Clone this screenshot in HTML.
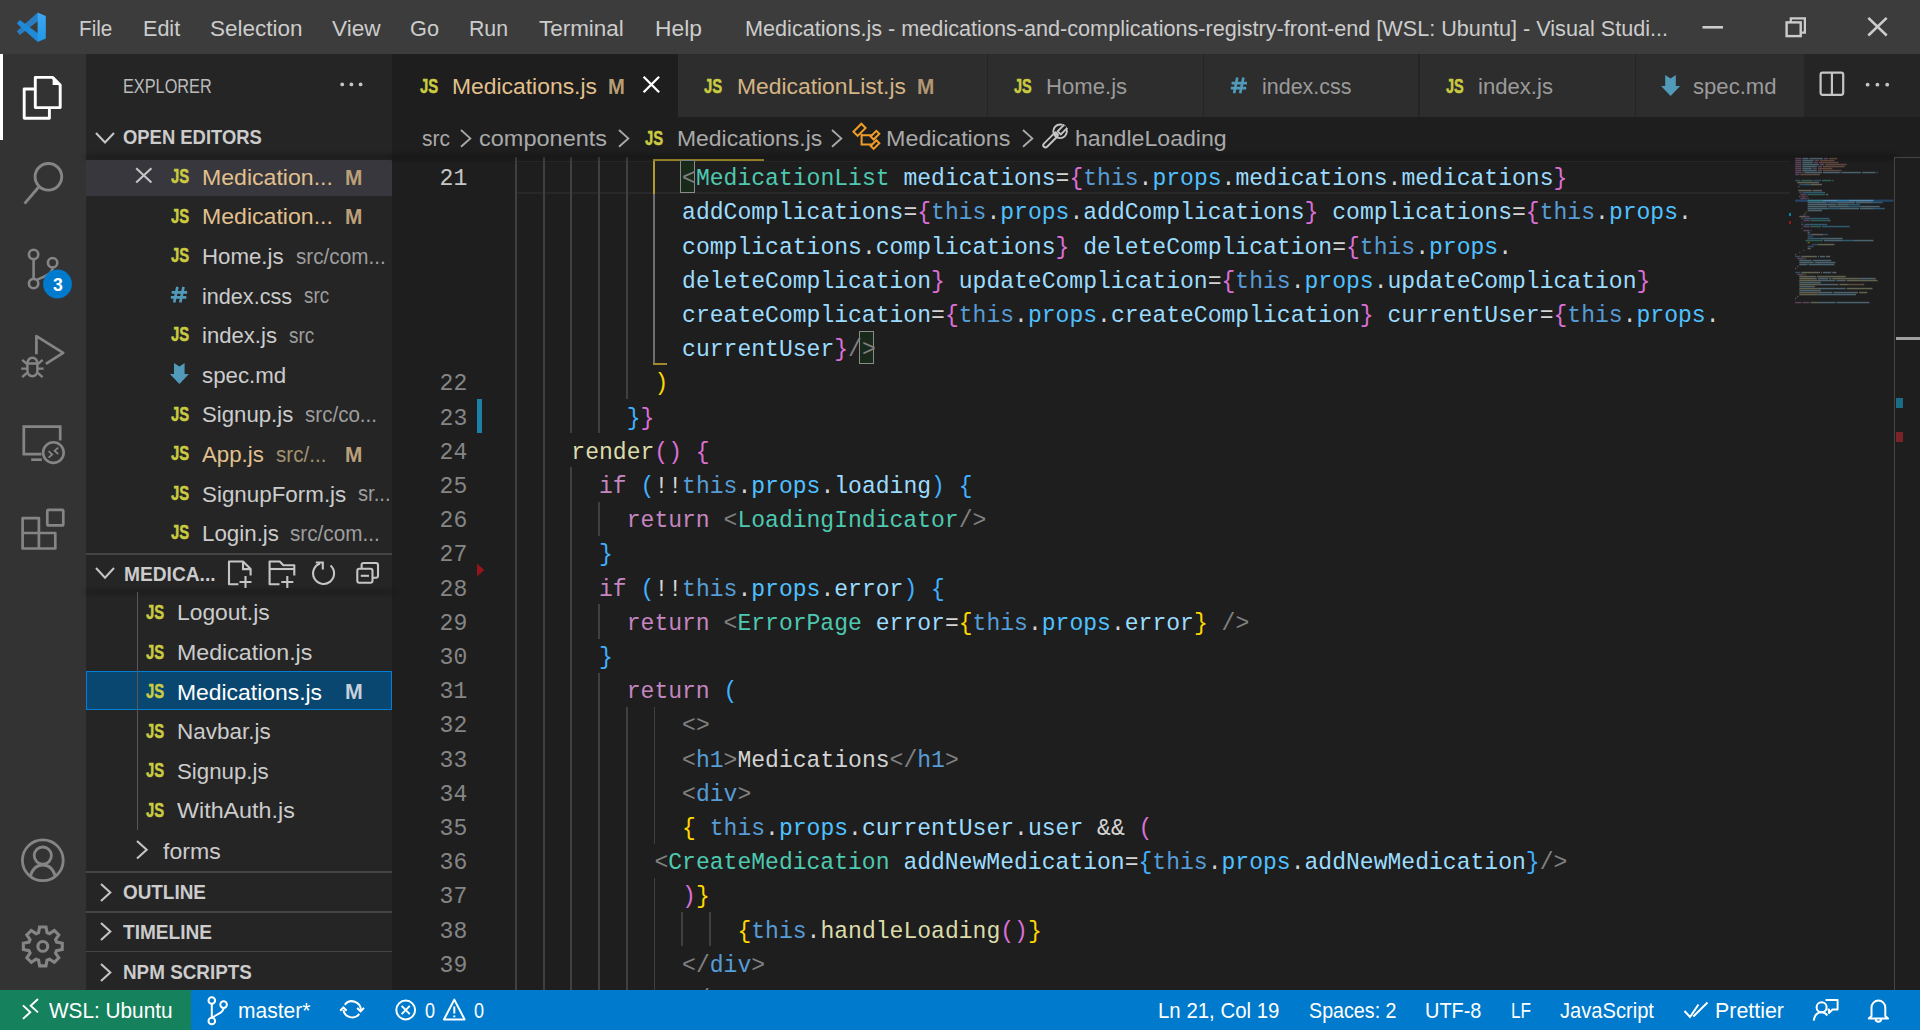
<!DOCTYPE html>
<html><head><meta charset="utf-8"><title>VS Code</title>
<style>
html,body{margin:0;padding:0;width:1920px;height:1030px;overflow:hidden;background:#1e1e1e;}
body{position:relative;font-family:"Liberation Sans",sans-serif;}
.t{position:absolute;white-space:pre;transform-origin:0 0;}
.code{position:absolute;left:0;white-space:pre;font-family:"Liberation Mono",monospace;font-size:23.0667px;line-height:34.2px;height:34.2px;color:#d4d4d4;}
svg{overflow:visible;}
</style></head><body>
<div style="position:absolute;left:0.00px;top:0.00px;width:1920.00px;height:54.00px;background:#3c3c3c;"></div>
<div style="position:absolute;left:0.00px;top:54.00px;width:86.00px;height:936.00px;background:#333333;"></div>
<div style="position:absolute;left:86.00px;top:54.00px;width:306.00px;height:936.00px;background:#252526;"></div>
<div style="position:absolute;left:392.00px;top:54.00px;width:1528.00px;height:936.00px;background:#1e1e1e;"></div>
<svg style="position:absolute;left:10px;top:5px;" width="45" height="45" viewBox="10 5 45 45">
<defs><linearGradient id="lgb" x1="0" y1="0" x2="0" y2="1"><stop offset="0" stop-color="#3ea8f2"/><stop offset="1" stop-color="#2196e8"/></linearGradient></defs>
<polygon points="16.8,31.3 37.6,12.6 38.8,20.4 19.8,35.0" fill="#2a7dc0"/>
<polygon points="19.8,19.9 38.8,33.9 37.6,42.1 16.8,23.4" fill="#1f8ad8"/>
<polygon points="37.6,12.6 45.8,16.1 45.8,38.6 37.6,42.1" fill="url(#lgb)"/>
</svg>
<div class="t" style="left:78.70px;top:13.63px;font-size:22.4px;line-height:29px;color:#cccccc;transform:scaleX(0.9234);">File</div>
<div class="t" style="left:142.80px;top:13.63px;font-size:22.4px;line-height:29px;color:#cccccc;transform:scaleX(0.9627);">Edit</div>
<div class="t" style="left:209.70px;top:13.63px;font-size:22.4px;line-height:29px;color:#cccccc;transform:scaleX(1.0057);">Selection</div>
<div class="t" style="left:332.00px;top:13.63px;font-size:22.4px;line-height:29px;color:#cccccc;transform:scaleX(1.0112);">View</div>
<div class="t" style="left:410.00px;top:13.63px;font-size:22.4px;line-height:29px;color:#cccccc;transform:scaleX(0.9698);">Go</div>
<div class="t" style="left:469.40px;top:13.63px;font-size:22.4px;line-height:29px;color:#cccccc;transform:scaleX(0.9488);">Run</div>
<div class="t" style="left:538.80px;top:13.63px;font-size:22.4px;line-height:29px;color:#cccccc;transform:scaleX(1.0015);">Terminal</div>
<div class="t" style="left:654.60px;top:13.63px;font-size:22.4px;line-height:29px;color:#cccccc;transform:scaleX(1.0189);">Help</div>
<div class="t" style="left:744.50px;top:13.63px;font-size:22.4px;line-height:29px;color:#cccccc;transform:scaleX(0.9663);">Medications.js - medications-and-complications-registry-front-end [WSL: Ubuntu] - Visual Studi...</div>
<svg style="position:absolute;left:1690px;top:5px;" width="220" height="45" viewBox="1690 5 220 45">
<rect x="1702.5" y="26" width="20.5" height="2.6" fill="#cccccc"/>
<rect x="1786.6" y="22.4" width="14.1" height="13.7" fill="none" stroke="#cccccc" stroke-width="2.4"/>
<path d="M1790.8,22.4 V18.3 H1804.9 V32.6 H1801.9" fill="none" stroke="#cccccc" stroke-width="2.2"/>
<path d="M1868.3,17.9 L1886.7,35.5 M1886.7,17.9 L1868.3,35.5" stroke="#cccccc" stroke-width="2.6"/>
</svg>
<div style="position:absolute;left:0.00px;top:54.00px;width:3.00px;height:86.00px;background:#ffffff;"></div>
<svg style="position:absolute;left:15px;top:70px;" width="55" height="55" viewBox="15 70 55 55">
<path d="M34.5,89 H24.2 V118.3 H49.4 V108.8" fill="none" stroke="#ffffff" stroke-width="2.9" stroke-linejoin="round"/>
<path d="M35.3,77.4 H52.6 L60.2,85 V107.6 H35.3 Z" fill="none" stroke="#ffffff" stroke-width="2.9" stroke-linejoin="round"/>
<path d="M52.6,77.4 V85 H60.2 Z" fill="#ffffff"/>
</svg>
<svg style="position:absolute;left:15px;top:155px;" width="55" height="55" viewBox="15 155 55 55">
<circle cx="48.4" cy="176.8" r="13.3" fill="none" stroke="#858585" stroke-width="2.9"/>
<path d="M38.5,187.2 L24.6,203.6" stroke="#858585" stroke-width="2.9"/>
</svg>
<svg style="position:absolute;left:15px;top:240px;" width="60" height="60" viewBox="15 240 60 60">
<circle cx="33.6" cy="254.4" r="4.7" fill="none" stroke="#858585" stroke-width="2.6"/>
<circle cx="52.6" cy="262.7" r="4.7" fill="none" stroke="#858585" stroke-width="2.6"/>
<circle cx="33.6" cy="283.6" r="4.7" fill="none" stroke="#858585" stroke-width="2.6"/>
<path d="M33.6,259.1 V278.9" stroke="#858585" stroke-width="2.6"/>
<path d="M52.6,267.4 C52.6,274 46,275.5 36.5,280" fill="none" stroke="#858585" stroke-width="2.6"/>
<circle cx="57.5" cy="284" r="14.4" fill="#007acc"/>
</svg>
<div class="t" style="left:52.60px;top:272.58px;font-size:18.5px;line-height:24px;color:#ffffff;font-weight:700;transform:scaleX(0.9545);">3</div>
<svg style="position:absolute;left:15px;top:325px;" width="60" height="60" viewBox="15 325 60 60">
<path d="M36.4,354.2 V336.2 L63.2,352.9 L45.8,363.9" fill="none" stroke="#858585" stroke-width="2.7" stroke-linejoin="round"/>
<path d="M27.4,363.6 H37.4 V370.6 A5,5.6 0 0 1 27.4,370.6 Z" fill="none" stroke="#858585" stroke-width="2.5"/>
<path d="M27.4,363.6 A5,5.9 0 0 1 37.4,363.6" fill="none" stroke="#858585" stroke-width="2.5"/>
<path d="M22.2,359.9 L27,364.2 M42.6,359.9 L37.8,364.2 M21.2,368.6 H27.2 M37.6,368.6 H43.6 M22.2,377.2 L27,372.8 M42.6,377.2 L37.8,372.8" stroke="#858585" stroke-width="2.4"/>
</svg>
<svg style="position:absolute;left:15px;top:415px;" width="60" height="60" viewBox="15 415 60 60">
<path d="M41.5,454.2 H23.8 V426.6 H60.2 V440.5" fill="none" stroke="#858585" stroke-width="2.7"/>
<path d="M31.2,459.7 H41.8" stroke="#858585" stroke-width="2.7"/>
<circle cx="53.4" cy="452.6" r="10.3" fill="none" stroke="#858585" stroke-width="2.6"/>
<path d="M48.6,451.2 L52.2,454.4 L48.6,457.6 M58.2,447.6 L54.6,450.8 L58.2,454" fill="none" stroke="#858585" stroke-width="1.8"/>
</svg>
<svg style="position:absolute;left:15px;top:500px;" width="60" height="60" viewBox="15 500 60 60">
<path d="M22.6,533 H55.3 V548.5 H22.6 V518.2 H38.9 V548.5" fill="none" stroke="#858585" stroke-width="2.7" stroke-linejoin="round"/>
<rect x="47.3" y="509.9" width="16" height="15.5" rx="1.5" fill="none" stroke="#858585" stroke-width="2.7"/>
</svg>
<svg style="position:absolute;left:15px;top:830px;" width="60" height="60" viewBox="15 830 60 60">
<circle cx="42.8" cy="860.3" r="20.4" fill="none" stroke="#858585" stroke-width="2.8"/>
<circle cx="42.8" cy="855.6" r="8.6" fill="none" stroke="#858585" stroke-width="2.8"/>
<path d="M30.2,876.6 C32.5,868 38,865 42.8,865 C47.6,865 53.1,868 55.4,876.6" fill="none" stroke="#858585" stroke-width="2.8"/>
</svg>
<svg style="position:absolute;left:15px;top:915px;" width="60" height="60" viewBox="15 915 60 60">
<polygon points="38.54,932.64 39.66,926.95 45.94,926.95 47.06,932.64 49.52,933.66 54.33,930.43 58.77,934.87 55.54,939.68 56.56,942.14 62.25,943.26 62.25,949.54 56.56,950.66 55.54,953.12 58.77,957.93 54.33,962.37 49.52,959.14 47.06,960.16 45.94,965.85 39.66,965.85 38.54,960.16 36.08,959.14 31.27,962.37 26.83,957.93 30.06,953.12 29.04,950.66 23.35,949.54 23.35,943.26 29.04,942.14 30.06,939.68 26.83,934.87 31.27,930.43 36.08,933.66" fill="none" stroke="#858585" stroke-width="3.1" stroke-linejoin="miter"/>
<circle cx="42.8" cy="946.4" r="4.9" fill="none" stroke="#858585" stroke-width="3.1"/>
</svg>
<div class="t" style="left:123.00px;top:72.93px;font-size:19.8px;line-height:26px;color:#bbbbbb;transform:scaleX(0.8237);">EXPLORER</div>
<svg style="position:absolute;left:335px;top:78px;" width="35" height="14" viewBox="335 78 35 14"><circle cx="342.2" cy="84.4" r="1.9" fill="#c5c5c5"/><circle cx="351.4" cy="84.4" r="1.9" fill="#c5c5c5"/><circle cx="360.6" cy="84.4" r="1.9" fill="#c5c5c5"/></svg>
<svg style="position:absolute;left:92.5px;top:130px;" width="24.0" height="15.5" viewBox="92.5 130 24.0 15.5"><path d="M95.5,133 L104.5,142.5 L113.5,133" fill="none" stroke="#c5c5c5" stroke-width="2.1"/></svg>
<div class="t" style="left:123.00px;top:123.83px;font-size:19.8px;line-height:26px;color:#cccccc;font-weight:700;transform:scaleX(0.9311);">OPEN EDITORS</div>
<div style="position:absolute;left:86px;top:157px;width:306px;height:0;box-shadow:0 0 5px 1px rgba(0,0,0,0.55);"></div>
<div style="position:absolute;left:86.00px;top:159.50px;width:306.00px;height:36.50px;background:#37373d;"></div>
<svg style="position:absolute;left:130px;top:162px;" width="28" height="28" viewBox="130 162 28 28"><path d="M136.2,168.3 L151.4,182.6 M151.4,168.3 L136.2,182.6" stroke="#c5c5c5" stroke-width="2.1"/></svg>
<div class="t" style="left:170.70px;top:163.90px;font-size:19.331395348837212px;line-height:25px;color:#cbcb41;font-weight:700;transform:scaleX(0.7685);-webkit-text-stroke:0.45px #cbcb41;">JS</div>
<div class="t" style="left:202.30px;top:162.73px;font-size:22.4px;line-height:29px;color:#e2c08d;transform:scaleX(1.0314);">Medication...</div>
<div class="t" style="left:345.20px;top:163.51px;font-size:21.6px;line-height:28px;color:#bba07a;font-weight:700;transform:scaleX(0.9647);">M</div>
<div class="t" style="left:170.70px;top:203.52px;font-size:19.331395348837212px;line-height:25px;color:#cbcb41;font-weight:700;transform:scaleX(0.7685);-webkit-text-stroke:0.45px #cbcb41;">JS</div>
<div class="t" style="left:202.30px;top:202.35px;font-size:22.4px;line-height:29px;color:#e2c08d;transform:scaleX(1.0314);">Medication...</div>
<div class="t" style="left:345.20px;top:203.13px;font-size:21.6px;line-height:28px;color:#bba07a;font-weight:700;transform:scaleX(0.9647);">M</div>
<div class="t" style="left:170.70px;top:243.14px;font-size:19.331395348837212px;line-height:25px;color:#cbcb41;font-weight:700;transform:scaleX(0.7685);-webkit-text-stroke:0.45px #cbcb41;">JS</div>
<div class="t" style="left:202.30px;top:241.97px;font-size:22.4px;line-height:29px;color:#cccccc;transform:scaleX(0.9938);">Home.js</div>
<div class="t" style="left:295.60px;top:242.75px;font-size:21.6px;line-height:28px;color:#9d9d9d;transform:scaleX(0.9580);">src/com...</div>
<svg style="position:absolute;left:167px;top:283px;" width="24" height="24" viewBox="167 283 24 24"><path d="M177.40,286.86 L174.20,302.46 M183.50,286.86 L180.30,302.46 M171.70,292.46 H187.10 M170.90,297.46 H186.30" stroke="#519aba" stroke-width="2.7"/></svg>
<div class="t" style="left:202.30px;top:281.59px;font-size:22.4px;line-height:29px;color:#cccccc;transform:scaleX(0.9646);">index.css</div>
<div class="t" style="left:303.80px;top:282.37px;font-size:21.6px;line-height:28px;color:#9d9d9d;transform:scaleX(0.8739);">src</div>
<div class="t" style="left:170.70px;top:322.38px;font-size:19.331395348837212px;line-height:25px;color:#cbcb41;font-weight:700;transform:scaleX(0.7685);-webkit-text-stroke:0.45px #cbcb41;">JS</div>
<div class="t" style="left:202.30px;top:321.21px;font-size:22.4px;line-height:29px;color:#cccccc;transform:scaleX(0.9877);">index.js</div>
<div class="t" style="left:288.70px;top:321.99px;font-size:21.6px;line-height:28px;color:#9d9d9d;transform:scaleX(0.8774);">src</div>
<svg style="position:absolute;left:167px;top:361px;" width="24" height="25" viewBox="167 361 24 25"><polygon points="174.00,363.10 179.40,366.50 184.60,363.10 184.60,374.00 188.90,374.00 179.40,383.90 169.90,374.00 174.00,374.00" fill="#519aba"/></svg>
<div class="t" style="left:202.30px;top:360.83px;font-size:22.4px;line-height:29px;color:#cccccc;transform:scaleX(0.9956);">spec.md</div>
<div class="t" style="left:170.70px;top:401.62px;font-size:19.331395348837212px;line-height:25px;color:#cbcb41;font-weight:700;transform:scaleX(0.7685);-webkit-text-stroke:0.45px #cbcb41;">JS</div>
<div class="t" style="left:202.30px;top:400.45px;font-size:22.4px;line-height:29px;color:#cccccc;transform:scaleX(0.9905);">Signup.js</div>
<div class="t" style="left:305.00px;top:401.23px;font-size:21.6px;line-height:28px;color:#9d9d9d;transform:scaleX(0.9524);">src/co...</div>
<div class="t" style="left:170.70px;top:441.24px;font-size:19.331395348837212px;line-height:25px;color:#cbcb41;font-weight:700;transform:scaleX(0.7685);-webkit-text-stroke:0.45px #cbcb41;">JS</div>
<div class="t" style="left:202.30px;top:440.07px;font-size:22.4px;line-height:29px;color:#e2c08d;transform:scaleX(0.9940);">App.js</div>
<div class="t" style="left:275.60px;top:440.85px;font-size:21.6px;line-height:28px;color:#a4916f;transform:scaleX(0.9543);">src/...</div>
<div class="t" style="left:345.20px;top:440.85px;font-size:21.6px;line-height:28px;color:#bba07a;font-weight:700;transform:scaleX(0.9647);">M</div>
<div class="t" style="left:170.70px;top:480.86px;font-size:19.331395348837212px;line-height:25px;color:#cbcb41;font-weight:700;transform:scaleX(0.7685);-webkit-text-stroke:0.45px #cbcb41;">JS</div>
<div class="t" style="left:202.30px;top:479.69px;font-size:22.4px;line-height:29px;color:#cccccc;transform:scaleX(0.9995);">SignupForm.js</div>
<div class="t" style="left:358.00px;top:480.47px;font-size:21.6px;line-height:28px;color:#9d9d9d;transform:scaleX(0.9374);">sr...</div>
<div class="t" style="left:170.70px;top:520.48px;font-size:19.331395348837212px;line-height:25px;color:#cbcb41;font-weight:700;transform:scaleX(0.7685);-webkit-text-stroke:0.45px #cbcb41;">JS</div>
<div class="t" style="left:202.30px;top:519.31px;font-size:22.4px;line-height:29px;color:#cccccc;transform:scaleX(0.9978);">Login.js</div>
<div class="t" style="left:290.30px;top:520.09px;font-size:21.6px;line-height:28px;color:#9d9d9d;transform:scaleX(0.9580);">src/com...</div>
<div style="position:absolute;left:86.00px;top:553.30px;width:306.00px;height:1.80px;background:#444446;"></div>
<svg style="position:absolute;left:92.6px;top:565px;" width="24.0" height="15.600000000000023" viewBox="92.6 565 24.0 15.600000000000023"><path d="M95.6,568 L104.6,577.6 L113.6,568" fill="none" stroke="#c5c5c5" stroke-width="2.1"/></svg>
<div class="t" style="left:123.60px;top:561.13px;font-size:19.8px;line-height:26px;color:#cccccc;font-weight:700;transform:scaleX(0.9689);">MEDICA...</div>
<svg style="position:absolute;left:220px;top:555px;" width="170" height="35" viewBox="220 555 170 35">
<path d="M238.4,584.3 H229 V561.5 H243 L250.6,569.1 V575.5" fill="none" stroke="#c5c5c5" stroke-width="2.1" stroke-linejoin="round"/>
<path d="M243,561.5 V569.1 H250.6" fill="none" stroke="#c5c5c5" stroke-width="2.1"/>
<path d="M245.5,576 V588 M239.5,582 H251.5" stroke="#c5c5c5" stroke-width="2.1"/>
<path d="M279.5,584.3 H269.6 V561.5 H279.8 L283.3,565.2 H294.3 V575.5" fill="none" stroke="#c5c5c5" stroke-width="2.1" stroke-linejoin="round"/>
<path d="M269.6,569 H294.3" stroke="#c5c5c5" stroke-width="2.1"/>
<path d="M287.3,576 V588 M281.3,582 H293.3" stroke="#c5c5c5" stroke-width="2.1"/>
<path d="M320.1,563.5 A10.5,10.5 0 1 0 330.5,565.5" fill="none" stroke="#c5c5c5" stroke-width="2.1"/>
<path d="M315.8,562.5 H322.8 V569.5" fill="none" stroke="#c5c5c5" stroke-width="2.1"/>
<rect x="357.3" y="568.8" width="15.2" height="13.9" rx="2" fill="none" stroke="#c5c5c5" stroke-width="2.1"/>
<path d="M361.6,568.8 V565 A2,2 0 0 1 363.6,563 H376 A2,2 0 0 1 378,565 V575.7 A2,2 0 0 1 376,577.7 H372.5" fill="none" stroke="#c5c5c5" stroke-width="2.1"/>
<path d="M360.8,575.8 H369" stroke="#c5c5c5" stroke-width="2.1"/>
</svg>
<div style="position:absolute;left:86px;top:592px;width:306px;height:0;box-shadow:0 0 5px 1px rgba(0,0,0,0.55);"></div>
<div style="position:absolute;left:86.00px;top:670.80px;width:306.00px;height:39.60px;background:#094771;box-sizing:border-box;border:1.8px solid #007fd4;"></div>
<div style="position:absolute;left:137.10px;top:592.00px;width:1.20px;height:238.00px;background:#585858;"></div>
<div class="t" style="left:145.60px;top:599.90px;font-size:19.331395348837212px;line-height:25px;color:#cbcb41;font-weight:700;transform:scaleX(0.7685);-webkit-text-stroke:0.45px #cbcb41;">JS</div>
<div class="t" style="left:177.20px;top:598.43px;font-size:22.4px;line-height:29px;color:#cccccc;transform:scaleX(1.0193);">Logout.js</div>
<div class="t" style="left:145.60px;top:639.50px;font-size:19.331395348837212px;line-height:25px;color:#cbcb41;font-weight:700;transform:scaleX(0.7685);-webkit-text-stroke:0.45px #cbcb41;">JS</div>
<div class="t" style="left:177.20px;top:638.03px;font-size:22.4px;line-height:29px;color:#cccccc;transform:scaleX(1.0359);">Medication.js</div>
<div class="t" style="left:145.60px;top:679.10px;font-size:19.331395348837212px;line-height:25px;color:#cbcb41;font-weight:700;transform:scaleX(0.7685);-webkit-text-stroke:0.45px #cbcb41;">JS</div>
<div class="t" style="left:177.20px;top:677.63px;font-size:22.4px;line-height:29px;color:#ffffff;transform:scaleX(1.0225);">Medications.js</div>
<div class="t" style="left:145.60px;top:718.70px;font-size:19.331395348837212px;line-height:25px;color:#cbcb41;font-weight:700;transform:scaleX(0.7685);-webkit-text-stroke:0.45px #cbcb41;">JS</div>
<div class="t" style="left:177.20px;top:717.23px;font-size:22.4px;line-height:29px;color:#cccccc;transform:scaleX(1.0042);">Navbar.js</div>
<div class="t" style="left:145.60px;top:758.30px;font-size:19.331395348837212px;line-height:25px;color:#cbcb41;font-weight:700;transform:scaleX(0.7685);-webkit-text-stroke:0.45px #cbcb41;">JS</div>
<div class="t" style="left:177.20px;top:756.83px;font-size:22.4px;line-height:29px;color:#cccccc;transform:scaleX(0.9938);">Signup.js</div>
<div class="t" style="left:145.60px;top:797.90px;font-size:19.331395348837212px;line-height:25px;color:#cbcb41;font-weight:700;transform:scaleX(0.7685);-webkit-text-stroke:0.45px #cbcb41;">JS</div>
<div class="t" style="left:177.20px;top:796.43px;font-size:22.4px;line-height:29px;color:#cccccc;transform:scaleX(1.0403);">WithAuth.js</div>
<div class="t" style="left:345.20px;top:677.91px;font-size:21.6px;line-height:28px;color:#c6d0da;font-weight:700;transform:scaleX(0.9869);">M</div>
<svg style="position:absolute;left:134.3px;top:838.3px;" width="15.699999999999989" height="23.5" viewBox="134.3 838.3 15.699999999999989 23.5"><path d="M137.3,841.3 L147,850.05 L137.3,858.8" fill="none" stroke="#c5c5c5" stroke-width="2.1"/></svg>
<div class="t" style="left:162.90px;top:836.53px;font-size:22.4px;line-height:29px;color:#cccccc;transform:scaleX(1.0304);">forms</div>
<div style="position:absolute;left:86.00px;top:871.20px;width:306.00px;height:1.80px;background:#444446;"></div>
<svg style="position:absolute;left:98px;top:880.5px;" width="15.299999999999997" height="23.0" viewBox="98 880.5 15.299999999999997 23.0"><path d="M101,883.5 L110.3,892.0 L101,900.5" fill="none" stroke="#c5c5c5" stroke-width="2.1"/></svg>
<div class="t" style="left:122.70px;top:879.13px;font-size:19.8px;line-height:26px;color:#cccccc;font-weight:700;transform:scaleX(0.9549);">OUTLINE</div>
<div style="position:absolute;left:86.00px;top:911.40px;width:306.00px;height:1.80px;background:#444446;"></div>
<svg style="position:absolute;left:98px;top:920.3px;" width="15.299999999999997" height="23.0" viewBox="98 920.3 15.299999999999997 23.0"><path d="M101,923.3 L110.3,931.8 L101,940.3" fill="none" stroke="#c5c5c5" stroke-width="2.1"/></svg>
<div class="t" style="left:122.70px;top:918.93px;font-size:19.8px;line-height:26px;color:#cccccc;font-weight:700;transform:scaleX(0.9646);">TIMELINE</div>
<div style="position:absolute;left:86.00px;top:950.60px;width:306.00px;height:1.80px;background:#444446;"></div>
<svg style="position:absolute;left:98px;top:960.5px;" width="15.299999999999997" height="23.0" viewBox="98 960.5 15.299999999999997 23.0"><path d="M101,963.5 L110.3,972.0 L101,980.5" fill="none" stroke="#c5c5c5" stroke-width="2.1"/></svg>
<div class="t" style="left:122.70px;top:959.13px;font-size:19.8px;line-height:26px;color:#cccccc;font-weight:700;transform:scaleX(0.9532);">NPM SCRIPTS</div>
<div style="position:absolute;left:392.00px;top:54.00px;width:1528.00px;height:63.00px;background:#252526;"></div>
<div style="position:absolute;left:392.00px;top:54.00px;width:285.50px;height:63.00px;background:#1e1e1e;"></div>
<div style="position:absolute;left:677.50px;top:54.00px;width:310.10px;height:63.00px;background:#2d2d2d;"></div>
<div style="position:absolute;left:987.60px;top:54.00px;width:215.90px;height:63.00px;background:#2d2d2d;"></div>
<div style="position:absolute;left:1203.50px;top:54.00px;width:215.80px;height:63.00px;background:#2d2d2d;"></div>
<div style="position:absolute;left:1419.30px;top:54.00px;width:216.30px;height:63.00px;background:#2d2d2d;"></div>
<div style="position:absolute;left:1635.60px;top:54.00px;width:168.40px;height:63.00px;background:#2d2d2d;"></div>
<div style="position:absolute;left:986.70px;top:54.00px;width:1.80px;height:63.00px;background:#252526;"></div>
<div style="position:absolute;left:1202.60px;top:54.00px;width:1.80px;height:63.00px;background:#252526;"></div>
<div style="position:absolute;left:1418.40px;top:54.00px;width:1.80px;height:63.00px;background:#252526;"></div>
<div style="position:absolute;left:1634.70px;top:54.00px;width:1.80px;height:63.00px;background:#252526;"></div>
<div class="t" style="left:419.90px;top:73.39px;font-size:19.91279069767442px;line-height:26px;color:#cbcb41;font-weight:700;transform:scaleX(0.7502);-webkit-text-stroke:0.45px #cbcb41;">JS</div>
<div class="t" style="left:451.90px;top:72.33px;font-size:22.4px;line-height:29px;color:#e2c08d;transform:scaleX(1.0218);">Medications.js</div>
<div class="t" style="left:607.70px;top:72.51px;font-size:21.6px;line-height:28px;color:#b89c74;font-weight:700;transform:scaleX(0.9370);">M</div>
<svg style="position:absolute;left:638px;top:70px;" width="26" height="28" viewBox="638 70 26 28"><path d="M643.6,76.7 L659.1,92.2 M659.1,76.7 L643.6,92.2" stroke="#ffffff" stroke-width="2.3"/></svg>
<div class="t" style="left:704.40px;top:73.44px;font-size:20.348837209302328px;line-height:26px;color:#cbcb41;font-weight:700;transform:scaleX(0.7341);-webkit-text-stroke:0.45px #cbcb41;">JS</div>
<div class="t" style="left:737.00px;top:72.33px;font-size:22.4px;line-height:29px;color:#e2c08d;transform:scaleX(1.0209);opacity:0.92;">MedicationList.js</div>
<div class="t" style="left:916.60px;top:72.51px;font-size:21.6px;line-height:28px;color:#b09672;font-weight:700;transform:scaleX(0.9647);">M</div>
<div class="t" style="left:1014.10px;top:73.44px;font-size:20.348837209302328px;line-height:26px;color:#cbcb41;font-weight:700;transform:scaleX(0.7141);-webkit-text-stroke:0.45px #cbcb41;">JS</div>
<div class="t" style="left:1046.40px;top:72.33px;font-size:22.4px;line-height:29px;color:#9b9b9b;transform:scaleX(0.9877);">Home.js</div>
<svg style="position:absolute;left:1227px;top:74px;" width="24" height="24" viewBox="1227 74 24 24"><path d="M1237.30,77.60 L1234.10,93.20 M1243.40,77.60 L1240.20,93.20 M1231.60,83.20 H1247.00 M1230.80,88.20 H1246.20" stroke="#519aba" stroke-width="2.7"/></svg>
<div class="t" style="left:1262.00px;top:72.33px;font-size:22.4px;line-height:29px;color:#9b9b9b;transform:scaleX(0.9592);">index.css</div>
<div class="t" style="left:1446.20px;top:73.44px;font-size:20.348837209302328px;line-height:26px;color:#cbcb41;font-weight:700;transform:scaleX(0.7141);-webkit-text-stroke:0.45px #cbcb41;">JS</div>
<div class="t" style="left:1477.80px;top:72.33px;font-size:22.4px;line-height:29px;color:#9b9b9b;transform:scaleX(0.9877);">index.js</div>
<svg style="position:absolute;left:1659px;top:73px;" width="24" height="25" viewBox="1659 73 24 25"><polygon points="1665.20,75.10 1670.60,78.50 1675.80,75.10 1675.80,86.00 1680.10,86.00 1670.60,95.90 1661.10,86.00 1665.20,86.00" fill="#519aba"/></svg>
<div class="t" style="left:1693.40px;top:72.33px;font-size:22.4px;line-height:29px;color:#9b9b9b;transform:scaleX(0.9873);">spec.md</div>
<svg style="position:absolute;left:1810px;top:64px;" width="110" height="40" viewBox="1810 64 110 40">
<rect x="1820.6" y="72.6" width="22.6" height="22.2" rx="2" fill="none" stroke="#c5c5c5" stroke-width="2.2"/>
<path d="M1831.9,72.6 V94.8" stroke="#c5c5c5" stroke-width="2.2"/>
<circle cx="1867.6" cy="84.7" r="1.9" fill="#c5c5c5"/><circle cx="1877.4" cy="84.7" r="1.9" fill="#c5c5c5"/><circle cx="1887.2" cy="84.7" r="1.9" fill="#c5c5c5"/>
</svg>
<div style="position:absolute;left:392.00px;top:117.00px;width:1528.00px;height:40.00px;background:#1e1e1e;"></div>
<div class="t" style="left:421.60px;top:123.73px;font-size:22.4px;line-height:29px;color:#a9a9a9;transform:scaleX(0.9363);">src</div>
<svg style="position:absolute;left:457.5px;top:126.5px;" width="15.300000000000011" height="22.80000000000001" viewBox="457.5 126.5 15.300000000000011 22.80000000000001"><path d="M460.5,129.5 L469.8,137.9 L460.5,146.3" fill="none" stroke="#a9a9a9" stroke-width="1.9"/></svg>
<div class="t" style="left:479.00px;top:123.73px;font-size:22.4px;line-height:29px;color:#a9a9a9;transform:scaleX(1.0501);">components</div>
<svg style="position:absolute;left:616px;top:126.5px;" width="15.299999999999955" height="22.80000000000001" viewBox="616 126.5 15.299999999999955 22.80000000000001"><path d="M619,129.5 L628.3,137.9 L619,146.3" fill="none" stroke="#a9a9a9" stroke-width="1.9"/></svg>
<div class="t" style="left:645.10px;top:123.79px;font-size:20.784883720930235px;line-height:27px;color:#cbcb41;font-weight:700;transform:scaleX(0.7148);-webkit-text-stroke:0.45px #cbcb41;">JS</div>
<div class="t" style="left:676.70px;top:123.73px;font-size:22.4px;line-height:29px;color:#a9a9a9;transform:scaleX(1.0239);">Medications.js</div>
<svg style="position:absolute;left:829px;top:126.5px;" width="15.299999999999955" height="22.80000000000001" viewBox="829 126.5 15.299999999999955 22.80000000000001"><path d="M832,129.5 L841.3,137.9 L832,146.3" fill="none" stroke="#a9a9a9" stroke-width="1.9"/></svg>
<svg style="position:absolute;left:848px;top:118px;" width="36" height="36" viewBox="848 118 36 36">
<g fill="none" stroke="#ee9d28" stroke-width="2">
<rect x="-5.6" y="-3" width="11.2" height="6" transform="translate(859.5,129.8) rotate(-45)"/>
<rect x="-4" y="-2.1" width="8" height="4.2" transform="translate(875,135.2) rotate(-45)"/>
<rect x="-4" y="-2.1" width="8" height="4.2" transform="translate(875,144.6) rotate(-45)"/>
<path d="M861.6,133.8 V144.6 H872 M861.6,135.2 H872"/>
</g>
</svg>
<div class="t" style="left:886.00px;top:123.73px;font-size:22.4px;line-height:29px;color:#a9a9a9;transform:scaleX(1.0410);">Medications</div>
<svg style="position:absolute;left:1019.5px;top:126.5px;" width="15.299999999999955" height="22.80000000000001" viewBox="1019.5 126.5 15.299999999999955 22.80000000000001"><path d="M1022.5,129.5 L1031.8,137.9 L1022.5,146.3" fill="none" stroke="#a9a9a9" stroke-width="1.9"/></svg>
<svg style="position:absolute;left:1036px;top:118px;" width="36" height="36" viewBox="1036 118 36 36">
<path d="M1045.5,145.2 L1055.5,135.2" stroke="#c5c5c5" stroke-width="6.4" stroke-linecap="round"/>
<path d="M1045.5,145.2 L1055.5,135.2" stroke="#1e1e1e" stroke-width="2.6" stroke-linecap="round"/>
<circle cx="1060.1" cy="131.3" r="6.8" fill="none" stroke="#c5c5c5" stroke-width="1.9"/>
<path d="M1063.2,123.9 L1057.6,129.6 L1061.3,133.4 L1066.9,127.7" fill="#1e1e1e" stroke="none"/>
<path d="M1064.3,124.6 L1057.6,131.2 L1060.8,134.4 L1067.3,127.8" fill="none" stroke="#c5c5c5" stroke-width="1.9"/>
<rect x="1053.5" y="132" width="4" height="4" fill="#c5c5c5" transform="rotate(45 1055.5 134)"/>
</svg>
<div class="t" style="left:1075.00px;top:123.73px;font-size:22.4px;line-height:29px;color:#a9a9a9;transform:scaleX(1.0324);">handleLoading</div>
<div style="position:absolute;left:516.00px;top:160.50px;width:1274.00px;height:1.80px;background:#282828;"></div>
<div style="position:absolute;left:516.00px;top:191.90px;width:1274.00px;height:1.80px;background:#282828;"></div>
<div style="position:absolute;left:515.10px;top:159.50px;width:1.80px;height:34.50px;background:#404040;"></div>
<div style="position:absolute;left:542.78px;top:159.50px;width:1.80px;height:34.50px;background:#404040;"></div>
<div style="position:absolute;left:570.46px;top:159.50px;width:1.80px;height:34.50px;background:#404040;"></div>
<div style="position:absolute;left:598.14px;top:159.50px;width:1.80px;height:34.50px;background:#404040;"></div>
<div style="position:absolute;left:625.82px;top:159.50px;width:1.80px;height:34.50px;background:#404040;"></div>
<div style="position:absolute;left:515.10px;top:193.70px;width:1.80px;height:34.50px;background:#404040;"></div>
<div style="position:absolute;left:542.78px;top:193.70px;width:1.80px;height:34.50px;background:#404040;"></div>
<div style="position:absolute;left:570.46px;top:193.70px;width:1.80px;height:34.50px;background:#404040;"></div>
<div style="position:absolute;left:598.14px;top:193.70px;width:1.80px;height:34.50px;background:#404040;"></div>
<div style="position:absolute;left:625.82px;top:193.70px;width:1.80px;height:34.50px;background:#404040;"></div>
<div style="position:absolute;left:515.10px;top:227.90px;width:1.80px;height:34.50px;background:#404040;"></div>
<div style="position:absolute;left:542.78px;top:227.90px;width:1.80px;height:34.50px;background:#404040;"></div>
<div style="position:absolute;left:570.46px;top:227.90px;width:1.80px;height:34.50px;background:#404040;"></div>
<div style="position:absolute;left:598.14px;top:227.90px;width:1.80px;height:34.50px;background:#404040;"></div>
<div style="position:absolute;left:625.82px;top:227.90px;width:1.80px;height:34.50px;background:#404040;"></div>
<div style="position:absolute;left:515.10px;top:262.10px;width:1.80px;height:34.50px;background:#404040;"></div>
<div style="position:absolute;left:542.78px;top:262.10px;width:1.80px;height:34.50px;background:#404040;"></div>
<div style="position:absolute;left:570.46px;top:262.10px;width:1.80px;height:34.50px;background:#404040;"></div>
<div style="position:absolute;left:598.14px;top:262.10px;width:1.80px;height:34.50px;background:#404040;"></div>
<div style="position:absolute;left:625.82px;top:262.10px;width:1.80px;height:34.50px;background:#404040;"></div>
<div style="position:absolute;left:515.10px;top:296.30px;width:1.80px;height:34.50px;background:#404040;"></div>
<div style="position:absolute;left:542.78px;top:296.30px;width:1.80px;height:34.50px;background:#404040;"></div>
<div style="position:absolute;left:570.46px;top:296.30px;width:1.80px;height:34.50px;background:#404040;"></div>
<div style="position:absolute;left:598.14px;top:296.30px;width:1.80px;height:34.50px;background:#404040;"></div>
<div style="position:absolute;left:625.82px;top:296.30px;width:1.80px;height:34.50px;background:#404040;"></div>
<div style="position:absolute;left:515.10px;top:330.50px;width:1.80px;height:34.50px;background:#404040;"></div>
<div style="position:absolute;left:542.78px;top:330.50px;width:1.80px;height:34.50px;background:#404040;"></div>
<div style="position:absolute;left:570.46px;top:330.50px;width:1.80px;height:34.50px;background:#404040;"></div>
<div style="position:absolute;left:598.14px;top:330.50px;width:1.80px;height:34.50px;background:#404040;"></div>
<div style="position:absolute;left:625.82px;top:330.50px;width:1.80px;height:34.50px;background:#404040;"></div>
<div style="position:absolute;left:515.10px;top:364.70px;width:1.80px;height:34.50px;background:#404040;"></div>
<div style="position:absolute;left:542.78px;top:364.70px;width:1.80px;height:34.50px;background:#404040;"></div>
<div style="position:absolute;left:570.46px;top:364.70px;width:1.80px;height:34.50px;background:#404040;"></div>
<div style="position:absolute;left:598.14px;top:364.70px;width:1.80px;height:34.50px;background:#404040;"></div>
<div style="position:absolute;left:625.82px;top:364.70px;width:1.80px;height:34.50px;background:#404040;"></div>
<div style="position:absolute;left:515.10px;top:398.90px;width:1.80px;height:34.50px;background:#404040;"></div>
<div style="position:absolute;left:542.78px;top:398.90px;width:1.80px;height:34.50px;background:#404040;"></div>
<div style="position:absolute;left:570.46px;top:398.90px;width:1.80px;height:34.50px;background:#404040;"></div>
<div style="position:absolute;left:598.14px;top:398.90px;width:1.80px;height:34.50px;background:#404040;"></div>
<div style="position:absolute;left:515.10px;top:433.10px;width:1.80px;height:34.50px;background:#404040;"></div>
<div style="position:absolute;left:542.78px;top:433.10px;width:1.80px;height:34.50px;background:#404040;"></div>
<div style="position:absolute;left:515.10px;top:467.30px;width:1.80px;height:34.50px;background:#404040;"></div>
<div style="position:absolute;left:542.78px;top:467.30px;width:1.80px;height:34.50px;background:#404040;"></div>
<div style="position:absolute;left:570.46px;top:467.30px;width:1.80px;height:34.50px;background:#404040;"></div>
<div style="position:absolute;left:515.10px;top:501.50px;width:1.80px;height:34.50px;background:#404040;"></div>
<div style="position:absolute;left:542.78px;top:501.50px;width:1.80px;height:34.50px;background:#404040;"></div>
<div style="position:absolute;left:570.46px;top:501.50px;width:1.80px;height:34.50px;background:#404040;"></div>
<div style="position:absolute;left:598.14px;top:501.50px;width:1.80px;height:34.50px;background:#404040;"></div>
<div style="position:absolute;left:515.10px;top:535.70px;width:1.80px;height:34.50px;background:#404040;"></div>
<div style="position:absolute;left:542.78px;top:535.70px;width:1.80px;height:34.50px;background:#404040;"></div>
<div style="position:absolute;left:570.46px;top:535.70px;width:1.80px;height:34.50px;background:#404040;"></div>
<div style="position:absolute;left:515.10px;top:569.90px;width:1.80px;height:34.50px;background:#404040;"></div>
<div style="position:absolute;left:542.78px;top:569.90px;width:1.80px;height:34.50px;background:#404040;"></div>
<div style="position:absolute;left:570.46px;top:569.90px;width:1.80px;height:34.50px;background:#404040;"></div>
<div style="position:absolute;left:515.10px;top:604.10px;width:1.80px;height:34.50px;background:#404040;"></div>
<div style="position:absolute;left:542.78px;top:604.10px;width:1.80px;height:34.50px;background:#404040;"></div>
<div style="position:absolute;left:570.46px;top:604.10px;width:1.80px;height:34.50px;background:#404040;"></div>
<div style="position:absolute;left:598.14px;top:604.10px;width:1.80px;height:34.50px;background:#404040;"></div>
<div style="position:absolute;left:515.10px;top:638.30px;width:1.80px;height:34.50px;background:#404040;"></div>
<div style="position:absolute;left:542.78px;top:638.30px;width:1.80px;height:34.50px;background:#404040;"></div>
<div style="position:absolute;left:570.46px;top:638.30px;width:1.80px;height:34.50px;background:#404040;"></div>
<div style="position:absolute;left:515.10px;top:672.50px;width:1.80px;height:34.50px;background:#404040;"></div>
<div style="position:absolute;left:542.78px;top:672.50px;width:1.80px;height:34.50px;background:#404040;"></div>
<div style="position:absolute;left:570.46px;top:672.50px;width:1.80px;height:34.50px;background:#404040;"></div>
<div style="position:absolute;left:598.14px;top:672.50px;width:1.80px;height:34.50px;background:#404040;"></div>
<div style="position:absolute;left:515.10px;top:706.70px;width:1.80px;height:34.50px;background:#404040;"></div>
<div style="position:absolute;left:542.78px;top:706.70px;width:1.80px;height:34.50px;background:#404040;"></div>
<div style="position:absolute;left:570.46px;top:706.70px;width:1.80px;height:34.50px;background:#404040;"></div>
<div style="position:absolute;left:598.14px;top:706.70px;width:1.80px;height:34.50px;background:#404040;"></div>
<div style="position:absolute;left:625.82px;top:706.70px;width:1.80px;height:34.50px;background:#404040;"></div>
<div style="position:absolute;left:653.50px;top:706.70px;width:1.80px;height:34.50px;background:#404040;"></div>
<div style="position:absolute;left:515.10px;top:740.90px;width:1.80px;height:34.50px;background:#404040;"></div>
<div style="position:absolute;left:542.78px;top:740.90px;width:1.80px;height:34.50px;background:#404040;"></div>
<div style="position:absolute;left:570.46px;top:740.90px;width:1.80px;height:34.50px;background:#404040;"></div>
<div style="position:absolute;left:598.14px;top:740.90px;width:1.80px;height:34.50px;background:#404040;"></div>
<div style="position:absolute;left:625.82px;top:740.90px;width:1.80px;height:34.50px;background:#404040;"></div>
<div style="position:absolute;left:653.50px;top:740.90px;width:1.80px;height:34.50px;background:#404040;"></div>
<div style="position:absolute;left:515.10px;top:775.10px;width:1.80px;height:34.50px;background:#404040;"></div>
<div style="position:absolute;left:542.78px;top:775.10px;width:1.80px;height:34.50px;background:#404040;"></div>
<div style="position:absolute;left:570.46px;top:775.10px;width:1.80px;height:34.50px;background:#404040;"></div>
<div style="position:absolute;left:598.14px;top:775.10px;width:1.80px;height:34.50px;background:#404040;"></div>
<div style="position:absolute;left:625.82px;top:775.10px;width:1.80px;height:34.50px;background:#404040;"></div>
<div style="position:absolute;left:653.50px;top:775.10px;width:1.80px;height:34.50px;background:#404040;"></div>
<div style="position:absolute;left:515.10px;top:809.30px;width:1.80px;height:34.50px;background:#404040;"></div>
<div style="position:absolute;left:542.78px;top:809.30px;width:1.80px;height:34.50px;background:#404040;"></div>
<div style="position:absolute;left:570.46px;top:809.30px;width:1.80px;height:34.50px;background:#404040;"></div>
<div style="position:absolute;left:598.14px;top:809.30px;width:1.80px;height:34.50px;background:#404040;"></div>
<div style="position:absolute;left:625.82px;top:809.30px;width:1.80px;height:34.50px;background:#404040;"></div>
<div style="position:absolute;left:653.50px;top:809.30px;width:1.80px;height:34.50px;background:#404040;"></div>
<div style="position:absolute;left:515.10px;top:843.50px;width:1.80px;height:34.50px;background:#404040;"></div>
<div style="position:absolute;left:542.78px;top:843.50px;width:1.80px;height:34.50px;background:#404040;"></div>
<div style="position:absolute;left:570.46px;top:843.50px;width:1.80px;height:34.50px;background:#404040;"></div>
<div style="position:absolute;left:598.14px;top:843.50px;width:1.80px;height:34.50px;background:#404040;"></div>
<div style="position:absolute;left:625.82px;top:843.50px;width:1.80px;height:34.50px;background:#404040;"></div>
<div style="position:absolute;left:515.10px;top:877.70px;width:1.80px;height:34.50px;background:#404040;"></div>
<div style="position:absolute;left:542.78px;top:877.70px;width:1.80px;height:34.50px;background:#404040;"></div>
<div style="position:absolute;left:570.46px;top:877.70px;width:1.80px;height:34.50px;background:#404040;"></div>
<div style="position:absolute;left:598.14px;top:877.70px;width:1.80px;height:34.50px;background:#404040;"></div>
<div style="position:absolute;left:625.82px;top:877.70px;width:1.80px;height:34.50px;background:#404040;"></div>
<div style="position:absolute;left:653.50px;top:877.70px;width:1.80px;height:34.50px;background:#404040;"></div>
<div style="position:absolute;left:515.10px;top:911.90px;width:1.80px;height:34.50px;background:#404040;"></div>
<div style="position:absolute;left:542.78px;top:911.90px;width:1.80px;height:34.50px;background:#404040;"></div>
<div style="position:absolute;left:570.46px;top:911.90px;width:1.80px;height:34.50px;background:#404040;"></div>
<div style="position:absolute;left:598.14px;top:911.90px;width:1.80px;height:34.50px;background:#404040;"></div>
<div style="position:absolute;left:625.82px;top:911.90px;width:1.80px;height:34.50px;background:#404040;"></div>
<div style="position:absolute;left:653.50px;top:911.90px;width:1.80px;height:34.50px;background:#404040;"></div>
<div style="position:absolute;left:681.18px;top:911.90px;width:1.80px;height:34.50px;background:#404040;"></div>
<div style="position:absolute;left:708.86px;top:911.90px;width:1.80px;height:34.50px;background:#404040;"></div>
<div style="position:absolute;left:515.10px;top:946.10px;width:1.80px;height:34.50px;background:#404040;"></div>
<div style="position:absolute;left:542.78px;top:946.10px;width:1.80px;height:34.50px;background:#404040;"></div>
<div style="position:absolute;left:570.46px;top:946.10px;width:1.80px;height:34.50px;background:#404040;"></div>
<div style="position:absolute;left:598.14px;top:946.10px;width:1.80px;height:34.50px;background:#404040;"></div>
<div style="position:absolute;left:625.82px;top:946.10px;width:1.80px;height:34.50px;background:#404040;"></div>
<div style="position:absolute;left:653.50px;top:946.10px;width:1.80px;height:34.50px;background:#404040;"></div>
<div style="position:absolute;left:515.10px;top:980.30px;width:1.80px;height:34.50px;background:#404040;"></div>
<div style="position:absolute;left:542.78px;top:980.30px;width:1.80px;height:34.50px;background:#404040;"></div>
<div style="position:absolute;left:570.46px;top:980.30px;width:1.80px;height:34.50px;background:#404040;"></div>
<div style="position:absolute;left:598.14px;top:980.30px;width:1.80px;height:34.50px;background:#404040;"></div>
<div style="position:absolute;left:625.82px;top:980.30px;width:1.80px;height:34.50px;background:#404040;"></div>
<div style="position:absolute;left:653.50px;top:980.30px;width:1.80px;height:34.50px;background:#404040;"></div>
<div style="position:absolute;left:515.10px;top:157.00px;width:1.80px;height:2.80px;background:#404040;"></div>
<div style="position:absolute;left:542.78px;top:157.00px;width:1.80px;height:2.80px;background:#404040;"></div>
<div style="position:absolute;left:570.46px;top:157.00px;width:1.80px;height:2.80px;background:#404040;"></div>
<div style="position:absolute;left:598.14px;top:157.00px;width:1.80px;height:2.80px;background:#404040;"></div>
<div style="position:absolute;left:625.82px;top:157.00px;width:1.80px;height:2.80px;background:#404040;"></div>
<div style="position:absolute;left:653.30px;top:193.70px;width:1.80px;height:170.00px;background:#707070;"></div>
<div style="position:absolute;left:653.30px;top:159.50px;width:1.80px;height:34.20px;background:#b39b2b;"></div>
<div style="position:absolute;left:653.30px;top:159.00px;width:111.00px;height:1.80px;background:#a08a2a;"></div>
<div style="position:absolute;left:653.30px;top:362.90px;width:14.00px;height:1.80px;background:#a08a2a;"></div>
<div style="position:absolute;left:680.00px;top:160.20px;width:15.00px;height:33.20px;background:#1a2a1a;box-sizing:border-box;border:1.6px solid #8a8a8a;"></div>
<div style="position:absolute;left:859.30px;top:331.00px;width:15.00px;height:33.20px;background:#1a2a1a;box-sizing:border-box;border:1.6px solid #8a8a8a;"></div>
<div class="code" style="left:682.08px;top:162.10px;"><span style="color:#808080">&lt;</span><span style="color:#4ec9b0">MedicationList</span><span style="color:#d4d4d4"> </span><span style="color:#9cdcfe">medications</span><span style="color:#d4d4d4">=</span><span style="color:#da70d6">{</span><span style="color:#569cd6">this</span><span style="color:#d4d4d4">.</span><span style="color:#4fc1ff">props</span><span style="color:#d4d4d4">.</span><span style="color:#9cdcfe">medications</span><span style="color:#d4d4d4">.</span><span style="color:#9cdcfe">medications</span><span style="color:#da70d6">}</span></div>
<div class="code" style="left:682.08px;top:196.30px;"><span style="color:#9cdcfe">addComplications</span><span style="color:#d4d4d4">=</span><span style="color:#da70d6">{</span><span style="color:#569cd6">this</span><span style="color:#d4d4d4">.</span><span style="color:#4fc1ff">props</span><span style="color:#d4d4d4">.</span><span style="color:#9cdcfe">addComplications</span><span style="color:#da70d6">}</span><span style="color:#d4d4d4"> </span><span style="color:#9cdcfe">complications</span><span style="color:#d4d4d4">=</span><span style="color:#da70d6">{</span><span style="color:#569cd6">this</span><span style="color:#d4d4d4">.</span><span style="color:#4fc1ff">props</span><span style="color:#d4d4d4">.</span></div>
<div class="code" style="left:682.08px;top:230.50px;"><span style="color:#9cdcfe">complications</span><span style="color:#d4d4d4">.</span><span style="color:#9cdcfe">complications</span><span style="color:#da70d6">}</span><span style="color:#d4d4d4"> </span><span style="color:#9cdcfe">deleteComplication</span><span style="color:#d4d4d4">=</span><span style="color:#da70d6">{</span><span style="color:#569cd6">this</span><span style="color:#d4d4d4">.</span><span style="color:#4fc1ff">props</span><span style="color:#d4d4d4">.</span></div>
<div class="code" style="left:682.08px;top:264.70px;"><span style="color:#9cdcfe">deleteComplication</span><span style="color:#da70d6">}</span><span style="color:#d4d4d4"> </span><span style="color:#9cdcfe">updateComplication</span><span style="color:#d4d4d4">=</span><span style="color:#da70d6">{</span><span style="color:#569cd6">this</span><span style="color:#d4d4d4">.</span><span style="color:#4fc1ff">props</span><span style="color:#d4d4d4">.</span><span style="color:#9cdcfe">updateComplication</span><span style="color:#da70d6">}</span></div>
<div class="code" style="left:682.08px;top:298.90px;"><span style="color:#9cdcfe">createComplication</span><span style="color:#d4d4d4">=</span><span style="color:#da70d6">{</span><span style="color:#569cd6">this</span><span style="color:#d4d4d4">.</span><span style="color:#4fc1ff">props</span><span style="color:#d4d4d4">.</span><span style="color:#9cdcfe">createComplication</span><span style="color:#da70d6">}</span><span style="color:#d4d4d4"> </span><span style="color:#9cdcfe">currentUser</span><span style="color:#d4d4d4">=</span><span style="color:#da70d6">{</span><span style="color:#569cd6">this</span><span style="color:#d4d4d4">.</span><span style="color:#4fc1ff">props</span><span style="color:#d4d4d4">.</span></div>
<div class="code" style="left:682.08px;top:333.10px;"><span style="color:#9cdcfe">currentUser</span><span style="color:#da70d6">}</span><span style="color:#808080">/</span><span style="color:#808080">&gt;</span></div>
<div class="code" style="left:654.40px;top:367.30px;"><span style="color:#ffd700">)</span></div>
<div class="code" style="left:626.72px;top:401.50px;"><span style="color:#40b0ff">}</span><span style="color:#da70d6">}</span></div>
<div class="code" style="left:571.36px;top:435.70px;"><span style="color:#dcdcaa">render</span><span style="color:#da70d6">()</span><span style="color:#d4d4d4"> </span><span style="color:#da70d6">{</span></div>
<div class="code" style="left:599.04px;top:469.90px;"><span style="color:#c586c0">if</span><span style="color:#d4d4d4"> </span><span style="color:#40b0ff">(</span><span style="color:#d4d4d4">!!</span><span style="color:#569cd6">this</span><span style="color:#d4d4d4">.</span><span style="color:#4fc1ff">props</span><span style="color:#d4d4d4">.</span><span style="color:#9cdcfe">loading</span><span style="color:#40b0ff">)</span><span style="color:#d4d4d4"> </span><span style="color:#40b0ff">{</span></div>
<div class="code" style="left:626.72px;top:504.10px;"><span style="color:#c586c0">return</span><span style="color:#d4d4d4"> </span><span style="color:#808080">&lt;</span><span style="color:#4ec9b0">LoadingIndicator</span><span style="color:#808080">/&gt;</span></div>
<div class="code" style="left:599.04px;top:538.30px;"><span style="color:#40b0ff">}</span></div>
<div class="code" style="left:599.04px;top:572.50px;"><span style="color:#c586c0">if</span><span style="color:#d4d4d4"> </span><span style="color:#40b0ff">(</span><span style="color:#d4d4d4">!!</span><span style="color:#569cd6">this</span><span style="color:#d4d4d4">.</span><span style="color:#4fc1ff">props</span><span style="color:#d4d4d4">.</span><span style="color:#9cdcfe">error</span><span style="color:#40b0ff">)</span><span style="color:#d4d4d4"> </span><span style="color:#40b0ff">{</span></div>
<div class="code" style="left:626.72px;top:606.70px;"><span style="color:#c586c0">return</span><span style="color:#d4d4d4"> </span><span style="color:#808080">&lt;</span><span style="color:#4ec9b0">ErrorPage</span><span style="color:#d4d4d4"> </span><span style="color:#9cdcfe">error</span><span style="color:#d4d4d4">=</span><span style="color:#ffd700">{</span><span style="color:#569cd6">this</span><span style="color:#d4d4d4">.</span><span style="color:#4fc1ff">props</span><span style="color:#d4d4d4">.</span><span style="color:#9cdcfe">error</span><span style="color:#ffd700">}</span><span style="color:#d4d4d4"> </span><span style="color:#808080">/&gt;</span></div>
<div class="code" style="left:599.04px;top:640.90px;"><span style="color:#40b0ff">}</span></div>
<div class="code" style="left:626.72px;top:675.10px;"><span style="color:#c586c0">return</span><span style="color:#d4d4d4"> </span><span style="color:#40b0ff">(</span></div>
<div class="code" style="left:682.08px;top:709.30px;"><span style="color:#808080">&lt;&gt;</span></div>
<div class="code" style="left:682.08px;top:743.50px;"><span style="color:#808080">&lt;</span><span style="color:#569cd6">h1</span><span style="color:#808080">&gt;</span><span style="color:#d4d4d4">Medications</span><span style="color:#808080">&lt;/</span><span style="color:#569cd6">h1</span><span style="color:#808080">&gt;</span></div>
<div class="code" style="left:682.08px;top:777.70px;"><span style="color:#808080">&lt;</span><span style="color:#569cd6">div</span><span style="color:#808080">&gt;</span></div>
<div class="code" style="left:682.08px;top:811.90px;"><span style="color:#ffd700">{</span><span style="color:#d4d4d4"> </span><span style="color:#569cd6">this</span><span style="color:#d4d4d4">.</span><span style="color:#4fc1ff">props</span><span style="color:#d4d4d4">.</span><span style="color:#9cdcfe">currentUser</span><span style="color:#d4d4d4">.</span><span style="color:#9cdcfe">user</span><span style="color:#d4d4d4"> </span><span style="color:#d4d4d4">&amp;&amp;</span><span style="color:#d4d4d4"> </span><span style="color:#da70d6">(</span></div>
<div class="code" style="left:654.40px;top:846.10px;"><span style="color:#808080">&lt;</span><span style="color:#4ec9b0">CreateMedication</span><span style="color:#d4d4d4"> </span><span style="color:#9cdcfe">addNewMedication</span><span style="color:#d4d4d4">=</span><span style="color:#40b0ff">{</span><span style="color:#569cd6">this</span><span style="color:#d4d4d4">.</span><span style="color:#4fc1ff">props</span><span style="color:#d4d4d4">.</span><span style="color:#9cdcfe">addNewMedication</span><span style="color:#40b0ff">}</span><span style="color:#808080">/&gt;</span></div>
<div class="code" style="left:682.08px;top:880.30px;"><span style="color:#da70d6">)</span><span style="color:#ffd700">}</span></div>
<div class="code" style="left:737.44px;top:914.50px;"><span style="color:#ffd700">{</span><span style="color:#569cd6">this</span><span style="color:#d4d4d4">.</span><span style="color:#dcdcaa">handleLoading</span><span style="color:#da70d6">()</span><span style="color:#ffd700">}</span></div>
<div class="code" style="left:682.08px;top:948.70px;"><span style="color:#808080">&lt;/</span><span style="color:#569cd6">div</span><span style="color:#808080">&gt;</span></div>
<div class="code" style="left:682.08px;top:982.90px;"><span style="color:#808080">&lt;/&gt;</span></div>
<div class="code" style="left:439.62px;top:162.10px;color:#c6c6c6;width:27.68px;text-align:right;">21</div>
<div class="code" style="left:439.62px;top:367.30px;color:#858585;width:27.68px;text-align:right;">22</div>
<div class="code" style="left:439.62px;top:401.50px;color:#858585;width:27.68px;text-align:right;">23</div>
<div class="code" style="left:439.62px;top:435.70px;color:#858585;width:27.68px;text-align:right;">24</div>
<div class="code" style="left:439.62px;top:469.90px;color:#858585;width:27.68px;text-align:right;">25</div>
<div class="code" style="left:439.62px;top:504.10px;color:#858585;width:27.68px;text-align:right;">26</div>
<div class="code" style="left:439.62px;top:538.30px;color:#858585;width:27.68px;text-align:right;">27</div>
<div class="code" style="left:439.62px;top:572.50px;color:#858585;width:27.68px;text-align:right;">28</div>
<div class="code" style="left:439.62px;top:606.70px;color:#858585;width:27.68px;text-align:right;">29</div>
<div class="code" style="left:439.62px;top:640.90px;color:#858585;width:27.68px;text-align:right;">30</div>
<div class="code" style="left:439.62px;top:675.10px;color:#858585;width:27.68px;text-align:right;">31</div>
<div class="code" style="left:439.62px;top:709.30px;color:#858585;width:27.68px;text-align:right;">32</div>
<div class="code" style="left:439.62px;top:743.50px;color:#858585;width:27.68px;text-align:right;">33</div>
<div class="code" style="left:439.62px;top:777.70px;color:#858585;width:27.68px;text-align:right;">34</div>
<div class="code" style="left:439.62px;top:811.90px;color:#858585;width:27.68px;text-align:right;">35</div>
<div class="code" style="left:439.62px;top:846.10px;color:#858585;width:27.68px;text-align:right;">36</div>
<div class="code" style="left:439.62px;top:880.30px;color:#858585;width:27.68px;text-align:right;">37</div>
<div class="code" style="left:439.62px;top:914.50px;color:#858585;width:27.68px;text-align:right;">38</div>
<div class="code" style="left:439.62px;top:948.70px;color:#858585;width:27.68px;text-align:right;">39</div>
<div class="code" style="left:439.62px;top:982.90px;color:#858585;width:27.68px;text-align:right;">40</div>
<div style="position:absolute;left:477.00px;top:398.70px;width:5.20px;height:34.00px;background:#1b81a8;"></div>
<svg style="position:absolute;left:470px;top:555px;" width="25" height="30" viewBox="470 555 25 30"><path d="M477,563.4 L484.3,569.9 L477,576.4 Z" fill="#94151b"/></svg>
<div style="position:absolute;left:392px;top:157px;width:1503px;height:0;box-shadow:0 0 5px 1px rgba(0,0,0,0.6);"></div>
<svg style="position:absolute;left:1790px;top:155px;" width="110" height="155" viewBox="1790 155 110 155"><rect x="1795.2" y="157.8" width="6.2" height="1.5" fill="#c586c0" fill-opacity="0.36"/><rect x="1802.4" y="157.8" width="6.2" height="1.5" fill="#9cdcfe" fill-opacity="0.36"/><rect x="1809.6" y="157.8" width="13.4" height="1.5" fill="#9cdcfe" fill-opacity="0.36"/><rect x="1824.0" y="157.8" width="4.1" height="1.5" fill="#c586c0" fill-opacity="0.36"/><rect x="1829.2" y="157.8" width="8.2" height="1.5" fill="#ce9178" fill-opacity="0.36"/><rect x="1795.2" y="159.8" width="6.2" height="1.5" fill="#c586c0" fill-opacity="0.36"/><rect x="1802.4" y="159.8" width="11.3" height="1.5" fill="#9cdcfe" fill-opacity="0.36"/><rect x="1814.8" y="159.8" width="4.1" height="1.5" fill="#c586c0" fill-opacity="0.36"/><rect x="1819.9" y="159.8" width="14.4" height="1.5" fill="#ce9178" fill-opacity="0.36"/><rect x="1795.2" y="161.8" width="6.2" height="1.5" fill="#c586c0" fill-opacity="0.36"/><rect x="1802.4" y="161.8" width="10.3" height="1.5" fill="#9cdcfe" fill-opacity="0.36"/><rect x="1813.7" y="161.8" width="4.1" height="1.5" fill="#c586c0" fill-opacity="0.36"/><rect x="1818.9" y="161.8" width="19.6" height="1.5" fill="#ce9178" fill-opacity="0.36"/><rect x="1795.2" y="163.8" width="6.2" height="1.5" fill="#c586c0" fill-opacity="0.36"/><rect x="1802.4" y="163.8" width="16.5" height="1.5" fill="#9cdcfe" fill-opacity="0.36"/><rect x="1819.9" y="163.8" width="4.1" height="1.5" fill="#c586c0" fill-opacity="0.36"/><rect x="1825.1" y="163.8" width="21.6" height="1.5" fill="#ce9178" fill-opacity="0.36"/><rect x="1795.2" y="165.8" width="6.2" height="1.5" fill="#c586c0" fill-opacity="0.36"/><rect x="1802.4" y="165.8" width="14.4" height="1.5" fill="#9cdcfe" fill-opacity="0.36"/><rect x="1817.9" y="165.8" width="4.1" height="1.5" fill="#c586c0" fill-opacity="0.36"/><rect x="1823.0" y="165.8" width="21.6" height="1.5" fill="#ce9178" fill-opacity="0.36"/><rect x="1795.2" y="167.8" width="6.2" height="1.5" fill="#c586c0" fill-opacity="0.36"/><rect x="1802.4" y="167.8" width="9.3" height="1.5" fill="#9cdcfe" fill-opacity="0.36"/><rect x="1812.7" y="167.8" width="4.1" height="1.5" fill="#c586c0" fill-opacity="0.36"/><rect x="1817.9" y="167.8" width="14.4" height="1.5" fill="#ce9178" fill-opacity="0.36"/><rect x="1795.2" y="169.8" width="6.2" height="1.5" fill="#c586c0" fill-opacity="0.36"/><rect x="1802.4" y="169.8" width="14.4" height="1.5" fill="#9cdcfe" fill-opacity="0.36"/><rect x="1817.9" y="169.8" width="4.1" height="1.5" fill="#c586c0" fill-opacity="0.36"/><rect x="1823.0" y="169.8" width="18.5" height="1.5" fill="#ce9178" fill-opacity="0.36"/><rect x="1795.2" y="171.8" width="6.2" height="1.5" fill="#c586c0" fill-opacity="0.36"/><rect x="1802.4" y="171.8" width="1.0" height="1.5" fill="#d4d4d4" fill-opacity="0.36"/><rect x="1804.5" y="171.8" width="16.5" height="1.5" fill="#9cdcfe" fill-opacity="0.36"/><rect x="1821.0" y="171.8" width="1.0" height="1.5" fill="#d4d4d4" fill-opacity="0.36"/><rect x="1823.0" y="171.8" width="16.5" height="1.5" fill="#9cdcfe" fill-opacity="0.36"/><rect x="1839.5" y="171.8" width="1.0" height="1.5" fill="#d4d4d4" fill-opacity="0.36"/><rect x="1841.5" y="171.8" width="18.5" height="1.5" fill="#9cdcfe" fill-opacity="0.36"/><rect x="1860.1" y="171.8" width="1.0" height="1.5" fill="#d4d4d4" fill-opacity="0.36"/><rect x="1862.1" y="171.8" width="13.4" height="1.5" fill="#9cdcfe" fill-opacity="0.36"/><rect x="1876.6" y="171.8" width="1.0" height="1.5" fill="#d4d4d4" fill-opacity="0.36"/><rect x="1795.2" y="173.8" width="4.1" height="1.5" fill="#c586c0" fill-opacity="0.36"/><rect x="1800.3" y="173.8" width="19.6" height="1.5" fill="#ce9178" fill-opacity="0.36"/><rect x="1795.2" y="179.8" width="5.2" height="1.5" fill="#569cd6" fill-opacity="0.36"/><rect x="1801.4" y="179.8" width="11.3" height="1.5" fill="#4ec9b0" fill-opacity="0.36"/><rect x="1813.7" y="179.8" width="7.2" height="1.5" fill="#569cd6" fill-opacity="0.36"/><rect x="1822.0" y="179.8" width="9.3" height="1.5" fill="#4ec9b0" fill-opacity="0.36"/><rect x="1832.3" y="179.8" width="1.0" height="1.5" fill="#d4d4d4" fill-opacity="0.36"/><rect x="1797.3" y="181.8" width="17.5" height="1.5" fill="#dcdcaa" fill-opacity="0.36"/><rect x="1814.8" y="181.8" width="4.1" height="1.5" fill="#d4d4d4" fill-opacity="0.36"/><rect x="1799.3" y="183.8" width="4.1" height="1.5" fill="#569cd6" fill-opacity="0.36"/><rect x="1803.4" y="183.8" width="7.2" height="1.5" fill="#4fc1ff" fill-opacity="0.36"/><rect x="1810.6" y="183.8" width="9.3" height="1.5" fill="#dcdcaa" fill-opacity="0.36"/><rect x="1819.9" y="183.8" width="2.1" height="1.5" fill="#d4d4d4" fill-opacity="0.36"/><rect x="1798.3" y="185.8" width="1.0" height="1.5" fill="#d4d4d4" fill-opacity="0.36"/><rect x="1798.3" y="189.8" width="13.4" height="1.5" fill="#dcdcaa" fill-opacity="0.36"/><rect x="1812.7" y="189.8" width="9.3" height="1.5" fill="#d4d4d4" fill-opacity="0.36"/><rect x="1799.3" y="191.8" width="2.1" height="1.5" fill="#c586c0" fill-opacity="0.36"/><rect x="1802.4" y="191.8" width="22.7" height="1.5" fill="#4fc1ff" fill-opacity="0.36"/><rect x="1800.4" y="193.8" width="6.2" height="1.5" fill="#c586c0" fill-opacity="0.36"/><rect x="1807.6" y="193.8" width="1.0" height="1.5" fill="#d4d4d4" fill-opacity="0.36"/><rect x="1808.6" y="193.8" width="16.5" height="1.5" fill="#4ec9b0" fill-opacity="0.36"/><rect x="1826.1" y="193.8" width="2.1" height="1.5" fill="#d4d4d4" fill-opacity="0.36"/><rect x="1799.3" y="195.8" width="1.0" height="1.5" fill="#d4d4d4" fill-opacity="0.36"/><rect x="1801.4" y="195.8" width="4.1" height="1.5" fill="#c586c0" fill-opacity="0.36"/><rect x="1806.5" y="195.8" width="1.0" height="1.5" fill="#d4d4d4" fill-opacity="0.36"/><rect x="1800.4" y="197.8" width="6.2" height="1.5" fill="#c586c0" fill-opacity="0.36"/><rect x="1807.6" y="197.8" width="1.0" height="1.5" fill="#d4d4d4" fill-opacity="0.36"/><rect x="1795.2" y="199.6" width="98.3" height="2.2" fill="#264f78" fill-opacity="0.8"/><rect x="1807.6" y="199.8" width="15.5" height="1.5" fill="#4ec9b0" fill-opacity="0.45"/><rect x="1823.0" y="199.8" width="14.4" height="1.5" fill="#9cdcfe" fill-opacity="0.45"/><rect x="1837.4" y="199.8" width="11.3" height="1.5" fill="#4fc1ff" fill-opacity="0.45"/><rect x="1848.8" y="199.8" width="24.7" height="1.5" fill="#9cdcfe" fill-opacity="0.45"/><rect x="1807.6" y="201.8" width="18.5" height="1.5" fill="#9cdcfe" fill-opacity="0.36"/><rect x="1826.1" y="201.8" width="4.1" height="1.5" fill="#569cd6" fill-opacity="0.36"/><rect x="1830.2" y="201.8" width="6.2" height="1.5" fill="#4fc1ff" fill-opacity="0.36"/><rect x="1836.4" y="201.8" width="18.5" height="1.5" fill="#9cdcfe" fill-opacity="0.36"/><rect x="1856.0" y="201.8" width="15.5" height="1.5" fill="#9cdcfe" fill-opacity="0.36"/><rect x="1871.4" y="201.8" width="11.3" height="1.5" fill="#4fc1ff" fill-opacity="0.36"/><rect x="1807.6" y="203.8" width="14.4" height="1.5" fill="#9cdcfe" fill-opacity="0.36"/><rect x="1822.0" y="203.8" width="14.4" height="1.5" fill="#9cdcfe" fill-opacity="0.36"/><rect x="1837.4" y="203.8" width="11.3" height="1.5" fill="#9cdcfe" fill-opacity="0.36"/><rect x="1848.8" y="203.8" width="11.3" height="1.5" fill="#4fc1ff" fill-opacity="0.36"/><rect x="1807.6" y="205.8" width="19.6" height="1.5" fill="#9cdcfe" fill-opacity="0.36"/><rect x="1828.2" y="205.8" width="20.6" height="1.5" fill="#9cdcfe" fill-opacity="0.36"/><rect x="1848.8" y="205.8" width="11.3" height="1.5" fill="#4fc1ff" fill-opacity="0.36"/><rect x="1860.1" y="205.8" width="19.6" height="1.5" fill="#9cdcfe" fill-opacity="0.36"/><rect x="1807.6" y="207.8" width="20.6" height="1.5" fill="#9cdcfe" fill-opacity="0.36"/><rect x="1828.2" y="207.8" width="11.3" height="1.5" fill="#4fc1ff" fill-opacity="0.36"/><rect x="1839.5" y="207.8" width="19.6" height="1.5" fill="#9cdcfe" fill-opacity="0.36"/><rect x="1860.1" y="207.8" width="13.4" height="1.5" fill="#9cdcfe" fill-opacity="0.36"/><rect x="1873.5" y="207.8" width="11.3" height="1.5" fill="#4fc1ff" fill-opacity="0.36"/><rect x="1807.6" y="209.8" width="14.4" height="1.5" fill="#9cdcfe" fill-opacity="0.36"/><rect x="1805.5" y="211.8" width="1.0" height="1.5" fill="#ffd700" fill-opacity="0.36"/><rect x="1803.4" y="213.8" width="2.1" height="1.5" fill="#40b0ff" fill-opacity="0.36"/><rect x="1799.3" y="215.8" width="6.2" height="1.5" fill="#dcdcaa" fill-opacity="0.36"/><rect x="1805.5" y="215.8" width="4.1" height="1.5" fill="#da70d6" fill-opacity="0.36"/><rect x="1801.4" y="217.8" width="2.1" height="1.5" fill="#c586c0" fill-opacity="0.36"/><rect x="1804.5" y="217.8" width="24.7" height="1.5" fill="#4fc1ff" fill-opacity="0.36"/><rect x="1803.4" y="219.8" width="6.2" height="1.5" fill="#c586c0" fill-opacity="0.36"/><rect x="1810.7" y="219.8" width="1.0" height="1.5" fill="#d4d4d4" fill-opacity="0.36"/><rect x="1811.7" y="219.8" width="16.5" height="1.5" fill="#4ec9b0" fill-opacity="0.36"/><rect x="1828.2" y="219.8" width="2.1" height="1.5" fill="#d4d4d4" fill-opacity="0.36"/><rect x="1801.4" y="221.8" width="1.0" height="1.5" fill="#40b0ff" fill-opacity="0.36"/><rect x="1801.4" y="223.8" width="2.1" height="1.5" fill="#c586c0" fill-opacity="0.36"/><rect x="1804.5" y="223.8" width="22.7" height="1.5" fill="#4fc1ff" fill-opacity="0.36"/><rect x="1803.4" y="225.8" width="6.2" height="1.5" fill="#c586c0" fill-opacity="0.36"/><rect x="1810.7" y="225.8" width="1.0" height="1.5" fill="#d4d4d4" fill-opacity="0.36"/><rect x="1811.7" y="225.8" width="9.3" height="1.5" fill="#4ec9b0" fill-opacity="0.36"/><rect x="1822.0" y="225.8" width="27.8" height="1.5" fill="#4fc1ff" fill-opacity="0.36"/><rect x="1801.4" y="227.8" width="1.0" height="1.5" fill="#40b0ff" fill-opacity="0.36"/><rect x="1803.4" y="229.8" width="6.2" height="1.5" fill="#c586c0" fill-opacity="0.36"/><rect x="1810.7" y="229.8" width="1.0" height="1.5" fill="#40b0ff" fill-opacity="0.36"/><rect x="1807.6" y="231.8" width="2.1" height="1.5" fill="#d4d4d4" fill-opacity="0.36"/><rect x="1807.6" y="233.8" width="4.1" height="1.5" fill="#569cd6" fill-opacity="0.36"/><rect x="1811.7" y="233.8" width="11.3" height="1.5" fill="#d4d4d4" fill-opacity="0.36"/><rect x="1823.0" y="233.8" width="5.2" height="1.5" fill="#569cd6" fill-opacity="0.36"/><rect x="1807.6" y="235.8" width="5.2" height="1.5" fill="#569cd6" fill-opacity="0.36"/><rect x="1807.6" y="237.8" width="13.4" height="1.5" fill="#4fc1ff" fill-opacity="0.36"/><rect x="1821.0" y="237.8" width="21.6" height="1.5" fill="#9cdcfe" fill-opacity="0.36"/><rect x="1805.5" y="239.8" width="17.5" height="1.5" fill="#4ec9b0" fill-opacity="0.36"/><rect x="1824.0" y="239.8" width="18.5" height="1.5" fill="#9cdcfe" fill-opacity="0.36"/><rect x="1842.6" y="239.8" width="11.3" height="1.5" fill="#4fc1ff" fill-opacity="0.36"/><rect x="1853.9" y="239.8" width="19.6" height="1.5" fill="#9cdcfe" fill-opacity="0.36"/><rect x="1807.6" y="241.8" width="2.1" height="1.5" fill="#ffd700" fill-opacity="0.36"/><rect x="1811.7" y="243.8" width="6.2" height="1.5" fill="#569cd6" fill-opacity="0.36"/><rect x="1817.9" y="243.8" width="16.5" height="1.5" fill="#dcdcaa" fill-opacity="0.36"/><rect x="1807.6" y="245.8" width="6.2" height="1.5" fill="#569cd6" fill-opacity="0.36"/><rect x="1807.6" y="247.8" width="3.1" height="1.5" fill="#d4d4d4" fill-opacity="0.36"/><rect x="1803.4" y="249.8" width="1.0" height="1.5" fill="#40b0ff" fill-opacity="0.36"/><rect x="1799.3" y="251.8" width="1.0" height="1.5" fill="#da70d6" fill-opacity="0.36"/><rect x="1795.2" y="253.8" width="1.0" height="1.5" fill="#d4d4d4" fill-opacity="0.36"/><rect x="1795.2" y="255.8" width="5.2" height="1.5" fill="#569cd6" fill-opacity="0.36"/><rect x="1801.4" y="255.8" width="15.5" height="1.5" fill="#dcdcaa" fill-opacity="0.36"/><rect x="1817.9" y="255.8" width="1.0" height="1.5" fill="#d4d4d4" fill-opacity="0.36"/><rect x="1819.9" y="255.8" width="5.2" height="1.5" fill="#9cdcfe" fill-opacity="0.36"/><rect x="1826.1" y="255.8" width="4.1" height="1.5" fill="#d4d4d4" fill-opacity="0.36"/><rect x="1797.3" y="257.8" width="6.2" height="1.5" fill="#c586c0" fill-opacity="0.36"/><rect x="1804.5" y="257.8" width="1.0" height="1.5" fill="#d4d4d4" fill-opacity="0.36"/><rect x="1799.3" y="259.8" width="11.3" height="1.5" fill="#9cdcfe" fill-opacity="0.36"/><rect x="1810.6" y="259.8" width="1.0" height="1.5" fill="#d4d4d4" fill-opacity="0.36"/><rect x="1812.7" y="259.8" width="5.2" height="1.5" fill="#9cdcfe" fill-opacity="0.36"/><rect x="1817.9" y="259.8" width="13.4" height="1.5" fill="#9cdcfe" fill-opacity="0.36"/><rect x="1799.3" y="261.8" width="13.4" height="1.5" fill="#9cdcfe" fill-opacity="0.36"/><rect x="1812.7" y="261.8" width="1.0" height="1.5" fill="#d4d4d4" fill-opacity="0.36"/><rect x="1814.8" y="261.8" width="5.2" height="1.5" fill="#9cdcfe" fill-opacity="0.36"/><rect x="1819.9" y="261.8" width="15.5" height="1.5" fill="#9cdcfe" fill-opacity="0.36"/><rect x="1799.3" y="263.8" width="7.2" height="1.5" fill="#9cdcfe" fill-opacity="0.36"/><rect x="1806.5" y="263.8" width="1.0" height="1.5" fill="#d4d4d4" fill-opacity="0.36"/><rect x="1808.6" y="263.8" width="5.2" height="1.5" fill="#9cdcfe" fill-opacity="0.36"/><rect x="1813.7" y="263.8" width="20.6" height="1.5" fill="#9cdcfe" fill-opacity="0.36"/><rect x="1797.3" y="265.8" width="1.0" height="1.5" fill="#d4d4d4" fill-opacity="0.36"/><rect x="1795.2" y="267.8" width="1.0" height="1.5" fill="#d4d4d4" fill-opacity="0.36"/><rect x="1795.2" y="271.8" width="5.2" height="1.5" fill="#569cd6" fill-opacity="0.36"/><rect x="1801.4" y="271.8" width="18.5" height="1.5" fill="#dcdcaa" fill-opacity="0.36"/><rect x="1821.0" y="271.8" width="1.0" height="1.5" fill="#d4d4d4" fill-opacity="0.36"/><rect x="1823.0" y="271.8" width="8.2" height="1.5" fill="#9cdcfe" fill-opacity="0.36"/><rect x="1832.3" y="271.8" width="4.1" height="1.5" fill="#d4d4d4" fill-opacity="0.36"/><rect x="1797.3" y="273.8" width="6.2" height="1.5" fill="#c586c0" fill-opacity="0.36"/><rect x="1804.5" y="273.8" width="1.0" height="1.5" fill="#d4d4d4" fill-opacity="0.36"/><rect x="1799.3" y="275.8" width="9.3" height="1.5" fill="#dcdcaa" fill-opacity="0.36"/><rect x="1808.6" y="275.8" width="7.2" height="1.5" fill="#d4d4d4" fill-opacity="0.36"/><rect x="1816.8" y="275.8" width="8.2" height="1.5" fill="#dcdcaa" fill-opacity="0.36"/><rect x="1825.1" y="275.8" width="20.6" height="1.5" fill="#dcdcaa" fill-opacity="0.36"/><rect x="1799.3" y="277.8" width="16.5" height="1.5" fill="#dcdcaa" fill-opacity="0.36"/><rect x="1815.8" y="277.8" width="1.0" height="1.5" fill="#d4d4d4" fill-opacity="0.36"/><rect x="1817.9" y="277.8" width="10.3" height="1.5" fill="#9cdcfe" fill-opacity="0.36"/><rect x="1829.2" y="277.8" width="2.1" height="1.5" fill="#d4d4d4" fill-opacity="0.36"/><rect x="1832.3" y="277.8" width="8.2" height="1.5" fill="#dcdcaa" fill-opacity="0.36"/><rect x="1840.5" y="277.8" width="18.5" height="1.5" fill="#dcdcaa" fill-opacity="0.36"/><rect x="1859.1" y="277.8" width="14.4" height="1.5" fill="#9cdcfe" fill-opacity="0.36"/><rect x="1873.5" y="277.8" width="2.1" height="1.5" fill="#d4d4d4" fill-opacity="0.36"/><rect x="1799.3" y="279.8" width="18.5" height="1.5" fill="#dcdcaa" fill-opacity="0.36"/><rect x="1817.9" y="279.8" width="3.1" height="1.5" fill="#d4d4d4" fill-opacity="0.36"/><rect x="1820.9" y="279.8" width="13.4" height="1.5" fill="#9cdcfe" fill-opacity="0.36"/><rect x="1834.3" y="279.8" width="1.0" height="1.5" fill="#d4d4d4" fill-opacity="0.36"/><rect x="1836.4" y="279.8" width="5.2" height="1.5" fill="#9cdcfe" fill-opacity="0.36"/><rect x="1841.5" y="279.8" width="4.1" height="1.5" fill="#d4d4d4" fill-opacity="0.36"/><rect x="1846.7" y="279.8" width="8.2" height="1.5" fill="#dcdcaa" fill-opacity="0.36"/><rect x="1854.9" y="279.8" width="22.7" height="1.5" fill="#dcdcaa" fill-opacity="0.36"/><rect x="1799.3" y="281.8" width="13.4" height="1.5" fill="#9cdcfe" fill-opacity="0.36"/><rect x="1812.7" y="281.8" width="8.2" height="1.5" fill="#9cdcfe" fill-opacity="0.36"/><rect x="1799.3" y="283.8" width="18.5" height="1.5" fill="#dcdcaa" fill-opacity="0.36"/><rect x="1817.9" y="283.8" width="3.1" height="1.5" fill="#d4d4d4" fill-opacity="0.36"/><rect x="1820.9" y="283.8" width="13.4" height="1.5" fill="#9cdcfe" fill-opacity="0.36"/><rect x="1834.3" y="283.8" width="4.1" height="1.5" fill="#d4d4d4" fill-opacity="0.36"/><rect x="1839.5" y="283.8" width="8.2" height="1.5" fill="#dcdcaa" fill-opacity="0.36"/><rect x="1847.7" y="283.8" width="1.0" height="1.5" fill="#d4d4d4" fill-opacity="0.36"/><rect x="1848.8" y="283.8" width="14.4" height="1.5" fill="#ce9178" fill-opacity="0.36"/><rect x="1863.2" y="283.8" width="1.0" height="1.5" fill="#d4d4d4" fill-opacity="0.36"/><rect x="1799.3" y="285.8" width="13.4" height="1.5" fill="#9cdcfe" fill-opacity="0.36"/><rect x="1812.7" y="285.8" width="2.1" height="1.5" fill="#d4d4d4" fill-opacity="0.36"/><rect x="1799.3" y="287.8" width="18.5" height="1.5" fill="#dcdcaa" fill-opacity="0.36"/><rect x="1817.9" y="287.8" width="3.1" height="1.5" fill="#d4d4d4" fill-opacity="0.36"/><rect x="1820.9" y="287.8" width="13.4" height="1.5" fill="#9cdcfe" fill-opacity="0.36"/><rect x="1834.3" y="287.8" width="11.3" height="1.5" fill="#9cdcfe" fill-opacity="0.36"/><rect x="1846.7" y="287.8" width="25.8" height="1.5" fill="#dcdcaa" fill-opacity="0.36"/><rect x="1799.3" y="289.8" width="13.4" height="1.5" fill="#9cdcfe" fill-opacity="0.36"/><rect x="1812.7" y="289.8" width="8.2" height="1.5" fill="#9cdcfe" fill-opacity="0.36"/><rect x="1799.3" y="291.8" width="18.5" height="1.5" fill="#dcdcaa" fill-opacity="0.36"/><rect x="1817.9" y="291.8" width="3.1" height="1.5" fill="#d4d4d4" fill-opacity="0.36"/><rect x="1820.9" y="291.8" width="10.3" height="1.5" fill="#9cdcfe" fill-opacity="0.36"/><rect x="1831.2" y="291.8" width="1.0" height="1.5" fill="#d4d4d4" fill-opacity="0.36"/><rect x="1833.3" y="291.8" width="13.4" height="1.5" fill="#9cdcfe" fill-opacity="0.36"/><rect x="1846.7" y="291.8" width="7.2" height="1.5" fill="#9cdcfe" fill-opacity="0.36"/><rect x="1853.9" y="291.8" width="4.1" height="1.5" fill="#d4d4d4" fill-opacity="0.36"/><rect x="1859.1" y="291.8" width="8.2" height="1.5" fill="#dcdcaa" fill-opacity="0.36"/><rect x="1799.3" y="293.8" width="18.5" height="1.5" fill="#dcdcaa" fill-opacity="0.36"/><rect x="1817.9" y="293.8" width="38.1" height="1.5" fill="#9cdcfe" fill-opacity="0.36"/><rect x="1797.3" y="295.8" width="1.0" height="1.5" fill="#d4d4d4" fill-opacity="0.36"/><rect x="1795.2" y="297.8" width="1.0" height="1.5" fill="#d4d4d4" fill-opacity="0.36"/><rect x="1795.2" y="301.8" width="6.2" height="1.5" fill="#c586c0" fill-opacity="0.36"/><rect x="1802.4" y="301.8" width="7.2" height="1.5" fill="#c586c0" fill-opacity="0.36"/><rect x="1810.7" y="301.8" width="8.2" height="1.5" fill="#dcdcaa" fill-opacity="0.36"/><rect x="1818.9" y="301.8" width="16.5" height="1.5" fill="#9cdcfe" fill-opacity="0.36"/><rect x="1836.4" y="301.8" width="33.0" height="1.5" fill="#9cdcfe" fill-opacity="0.36"/></svg>
<div style="position:absolute;left:1894.20px;top:157.00px;width:1.20px;height:833.00px;background:#454545;"></div>
<div style="position:absolute;left:1894.20px;top:157.00px;width:25.80px;height:1.20px;background:#454545;"></div>
<div style="position:absolute;left:1895.60px;top:337.00px;width:24.00px;height:3.00px;background:#a0a0a0;"></div>
<div style="position:absolute;left:1895.60px;top:398.00px;width:7.60px;height:10.00px;background:#1b6d85;"></div>
<div style="position:absolute;left:1895.60px;top:432.00px;width:7.60px;height:10.00px;background:#7a2427;"></div>
<div style="position:absolute;left:1788.60px;top:213.00px;width:2.60px;height:2.80px;background:#0c7d9d;"></div>
<div style="position:absolute;left:1788.60px;top:221.00px;width:2.60px;height:2.80px;background:#94151b;"></div>
<div style="position:absolute;left:0.00px;top:990.00px;width:1920.00px;height:40.00px;background:#007acc;"></div>
<div style="position:absolute;left:0.00px;top:990.00px;width:191.00px;height:40.00px;background:#16825d;"></div>
<svg style="position:absolute;left:15px;top:995px;" width="35" height="30" viewBox="15 995 35 30"><path d="M23,1005.4 L30.3,1012.2 L23,1018.9 M38,999 L30.7,1005.8 L38,1012.4" fill="none" stroke="#ffffff" stroke-width="1.9"/></svg>
<div class="t" style="left:49.00px;top:996.71px;font-size:21.6px;line-height:28px;color:#ffffff;transform:scaleX(0.9617);">WSL: Ubuntu</div>
<svg style="position:absolute;left:200px;top:995px;" width="35" height="32" viewBox="200 995 35 32">
<circle cx="211.8" cy="1021" r="3.3" fill="none" stroke="#ffffff" stroke-width="2"/>
<circle cx="211.8" cy="1000.5" r="3.3" fill="none" stroke="#ffffff" stroke-width="2"/>
<circle cx="223.6" cy="1004.6" r="3.3" fill="none" stroke="#ffffff" stroke-width="2"/>
<path d="M211.8,1003.8 V1017.7 M223.6,1007.9 C223.6,1013 217,1013.5 212.8,1017.5" fill="none" stroke="#ffffff" stroke-width="2"/>
</svg>
<div class="t" style="left:237.50px;top:996.71px;font-size:21.6px;line-height:28px;color:#ffffff;transform:scaleX(0.9743);">master*</div>
<svg style="position:absolute;left:335px;top:995px;" width="35" height="30" viewBox="335 995 35 30">
<path d="M344.8,1004.8 A8.9,8.9 0 0 1 360.8,1010.4 M359.3,1013.8 A8.9,8.9 0 0 1 343.4,1010" fill="none" stroke="#ffffff" stroke-width="2"/>
<path d="M357.1,1007.9 L360.7,1011.3 L364,1007.9 M340.2,1010.7 L343.4,1007.5 L346.7,1010.7" fill="none" stroke="#ffffff" stroke-width="2"/>
</svg>
<svg style="position:absolute;left:390px;top:995px;" width="100" height="30" viewBox="390 995 100 30">
<circle cx="405.7" cy="1010" r="9.4" fill="none" stroke="#ffffff" stroke-width="2"/>
<path d="M401.6,1005.9 L409.8,1014.1 M409.8,1005.9 L401.6,1014.1" stroke="#ffffff" stroke-width="2"/>
<path d="M454.3,999.6 L464.6,1019.4 H444 Z" fill="none" stroke="#ffffff" stroke-width="2" stroke-linejoin="round"/>
<path d="M454.3,1006.5 V1013.5 M454.3,1015.5 V1017.3" stroke="#ffffff" stroke-width="2"/>
</svg>
<div class="t" style="left:425.00px;top:996.71px;font-size:21.6px;line-height:28px;color:#ffffff;transform:scaleX(0.8342);">0</div>
<div class="t" style="left:474.00px;top:996.71px;font-size:21.6px;line-height:28px;color:#ffffff;transform:scaleX(0.8342);">0</div>
<div class="t" style="left:1157.50px;top:996.71px;font-size:21.6px;line-height:28px;color:#ffffff;transform:scaleX(0.9454);">Ln 21, Col 19</div>
<div class="t" style="left:1308.50px;top:996.71px;font-size:21.6px;line-height:28px;color:#ffffff;transform:scaleX(0.9113);">Spaces: 2</div>
<div class="t" style="left:1425.00px;top:996.71px;font-size:21.6px;line-height:28px;color:#ffffff;transform:scaleX(0.9227);">UTF-8</div>
<div class="t" style="left:1511.00px;top:996.71px;font-size:21.6px;line-height:28px;color:#ffffff;transform:scaleX(0.7948);">LF</div>
<div class="t" style="left:1560.00px;top:996.71px;font-size:21.6px;line-height:28px;color:#ffffff;transform:scaleX(0.9319);">JavaScript</div>
<div class="t" style="left:1715.00px;top:996.71px;font-size:21.6px;line-height:28px;color:#ffffff;transform:scaleX(0.9905);">Prettier</div>
<svg style="position:absolute;left:1680px;top:995px;" width="240" height="30" viewBox="1680 995 240 30">
<path d="M1684.5,1011 L1690,1017 L1698.5,1004.5 M1693.3,1016.5 L1707.5,1002.5" fill="none" stroke="#ffffff" stroke-width="2"/>
<circle cx="1821.6" cy="1007.2" r="5" fill="none" stroke="#ffffff" stroke-width="2"/>
<path d="M1813.8,1020.6 C1814.5,1015 1817.5,1012.3 1821.6,1012.3 C1824,1012.3 1826,1013.5 1827.3,1015.5" fill="none" stroke="#ffffff" stroke-width="2"/>
<path d="M1825.5,1000 H1837.6 V1009.5 H1832.5 L1829,1013 V1009.5 H1827.5" fill="none" stroke="#ffffff" stroke-width="1.9" stroke-linejoin="round"/>
<path d="M1871.5,1016 V1007.5 A6.9,6.9 0 0 1 1885.3,1007.5 V1016 L1888,1018.5 H1868.8 Z M1875.5,1019.5 A3,3 0 0 0 1881.3,1019.5" fill="none" stroke="#ffffff" stroke-width="2" stroke-linejoin="round"/>
</svg>
</body></html>
